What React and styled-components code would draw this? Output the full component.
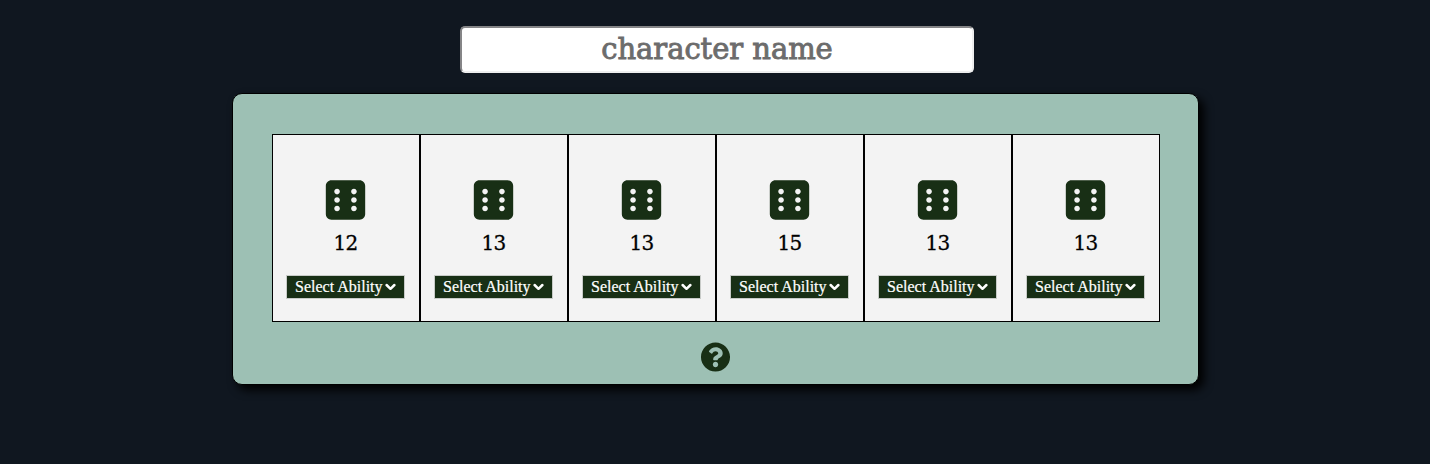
import React from "react";
import styled, { createGlobalStyle } from "styled-components";
import { FaDiceSix, FaQuestionCircle } from "react-icons/fa";

const GlobalStyle = createGlobalStyle`
  * { box-sizing: border-box; }
  body { margin: 0; background: #101720; }
`;

const Page = styled.main`
  display: flex;
  flex-direction: column;
  align-items: center;
  height: 464px;
  padding-top: 26px;
`;

const NameInput = styled.input`
  width: 514px;
  height: 47px;
  margin: 0 0 20px 4px;
  padding: 0 2px 2px;
  border: 2px solid;
  border-color: #858587 #eeeeee #eeeeee #858587;
  border-radius: 5px;
  background: #fff;
  font-family: "DejaVu Serif", serif;
  font-size: 29px;
  letter-spacing: -0.05px;
  text-align: center;
  &::placeholder { color: #6c6c6c; -webkit-text-stroke: 0.9px #6c6c6c; }
`;

const Panel = styled.section`
  display: flex;
  flex-direction: column;
  align-items: center;
  width: 967px;
  height: 292px;
  padding: 40px 0 0 1px;
  border: 1px solid #000;
  border-radius: 10px;
  background: #9dc0b4;
  box-shadow: 5px 5px 10px #000;
`;

const Rolls = styled.div`
  display: flex;
`;

const Roll = styled.div`
  display: flex;
  flex-direction: column;
  align-items: center;
  width: 148px;
  height: 188px;
  padding-top: 42.5px;
  border: 1px solid #000;
  background: #f3f3f3;
`;

const Die = styled(FaDiceSix)`
  display: block;
  width: 45px;
  height: 45px;
  margin-left: -1px;
  color: #182f15;
  transform: translateY(-0.5px);
`;

const Score = styled.span`
  height: 26px;
  margin: 7.5px 0 19px;
  font: 20px/26px "DejaVu Serif", serif;
  letter-spacing: -0.8px;
  color: #000;
  -webkit-text-stroke: 0.3px #000;
`;

const AbilitySelect = styled.button`
  display: flex;
  align-items: center;
  gap: 2.5px;
  width: 119px;
  height: 24px;
  margin-left: -1px;
  padding: 0 0 0 8.5px;
  border: 1px solid #c8cbc8;
  background: #182f15;
  color: #fff;
  font: 16px/20px "Liberation Serif", serif;
  -webkit-text-stroke: 0.2px #fff;
  white-space: nowrap;
`;

const Chevron = styled.svg`
  width: 11px;
  height: 8px;
  fill: none;
  stroke: #fff;
  stroke-width: 2.5;
  stroke-linecap: round;
  stroke-linejoin: round;
`;

const Help = styled(FaQuestionCircle)`
  display: block;
  width: 30px;
  height: 30px;
  margin: 19.5px 0 0;
  color: #182f15;
  transform: translateX(-0.5px);
`;

const scores = [12, 13, 13, 15, 13, 13];

export default function App() {
  return (
    <Page>
      <GlobalStyle />
      <NameInput placeholder="character name" />
      <Panel>
        <Rolls>
          {scores.map((score, i) => (
            <Roll key={i}>
              <Die />
              <Score>{score}</Score>
              <AbilitySelect>
                Select Ability
                <Chevron viewBox="0 0 11 8">
                  <path d="M1.6 2 5.5 5.8 9.4 2" />
                </Chevron>
              </AbilitySelect>
            </Roll>
          ))}
        </Rolls>
        <Help />
      </Panel>
    </Page>
  );
}
